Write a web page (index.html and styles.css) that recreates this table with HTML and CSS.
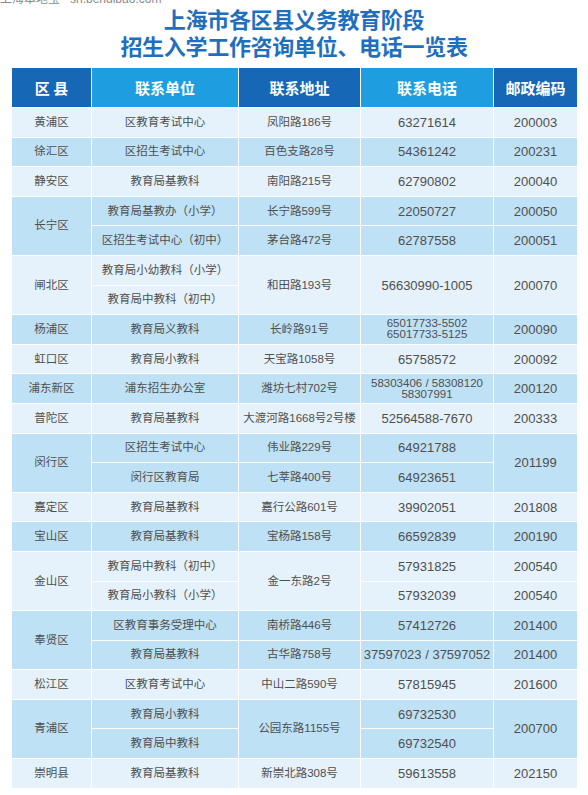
FILE: index.html
```html
<!DOCTYPE html>
<html lang="zh-CN">
<head>
<meta charset="utf-8">
<title>上海市各区县义务教育阶段招生入学工作咨询单位、电话一览表</title>
<link rel="stylesheet" href="styles.css">
</head>
<body>
<div class="page">
  <div class="wm"><span>上海本地宝&nbsp;&nbsp;&nbsp;sh.bendibao.com</span></div>
  <h1 class="title"><span class="tl">上海市各区县义务教育阶段</span><span class="tl">招生入学工作咨询单位、电话一览表</span></h1>
  <div class="grid">
    <div class="h dark">区&nbsp;县</div>
    <div class="h light">联系单位</div>
    <div class="h dark">联系地址</div>
    <div class="h light">联系电话</div>
    <div class="h dark">邮政编码</div>

    <div class="c a">黄浦区</div><div class="c a">区教育考试中心</div><div class="c a">凤阳路186号</div><div class="c a n">63271614</div><div class="c a n">200003</div>

    <div class="c b">徐汇区</div><div class="c b">区招生考试中心</div><div class="c b">百色支路28号</div><div class="c b n">54361242</div><div class="c b n">200231</div>

    <div class="c a">静安区</div><div class="c a">教育局基教科</div><div class="c a">南阳路215号</div><div class="c a n">62790802</div><div class="c a n">200040</div>

    <div class="c b s2">长宁区</div><div class="c b">教育局基教办（小学）</div><div class="c b">长宁路599号</div><div class="c b n">22050727</div><div class="c b n">200050</div>
    <div class="c b">区招生考试中心（初中）</div><div class="c b">茅台路472号</div><div class="c b n">62787558</div><div class="c b n">200051</div>

    <div class="c a s2">闸北区</div><div class="c a">教育局小幼教科（小学）</div><div class="c a s2">和田路193号</div><div class="c a n s2">56630990-1005</div><div class="c a n s2">200070</div>
    <div class="c a">教育局中教科（初中）</div>

    <div class="c b">杨浦区</div><div class="c b">教育局义教科</div><div class="c b">长岭路91号</div><div class="c b n sm">65017733-5502<br>65017733-5125</div><div class="c b n">200090</div>

    <div class="c a">虹口区</div><div class="c a">教育局小教科</div><div class="c a">天宝路1058号</div><div class="c a n">65758572</div><div class="c a n">200092</div>

    <div class="c b">浦东新区</div><div class="c b">浦东招生办公室</div><div class="c b">潍坊七村702号</div><div class="c b n sm">58303406 / 58308120<br>58307991</div><div class="c b n">200120</div>

    <div class="c a">普陀区</div><div class="c a">教育局基教科</div><div class="c a">大渡河路1668号2号楼</div><div class="c a n">52564588-7670</div><div class="c a n">200333</div>

    <div class="c b s2">闵行区</div><div class="c b">区招生考试中心</div><div class="c b">伟业路229号</div><div class="c b n">64921788</div><div class="c b n s2">201199</div>
    <div class="c b">闵行区教育局</div><div class="c b">七莘路400号</div><div class="c b n">64923651</div>

    <div class="c a">嘉定区</div><div class="c a">教育局基教科</div><div class="c a">嘉行公路601号</div><div class="c a n">39902051</div><div class="c a n">201808</div>

    <div class="c b">宝山区</div><div class="c b">教育局基教科</div><div class="c b">宝杨路158号</div><div class="c b n">66592839</div><div class="c b n">200190</div>

    <div class="c a s2">金山区</div><div class="c a">教育局中教科（初中）</div><div class="c a s2">金一东路2号</div><div class="c a n">57931825</div><div class="c a n">200540</div>
    <div class="c a">教育局小教科（小学）</div><div class="c a n">57932039</div><div class="c a n">200540</div>

    <div class="c b s2">奉贤区</div><div class="c b">区教育事务受理中心</div><div class="c b">南桥路446号</div><div class="c b n">57412726</div><div class="c b n">201400</div>
    <div class="c b">教育局基教科</div><div class="c b">古华路758号</div><div class="c b n">37597023 / 37597052</div><div class="c b n">201400</div>

    <div class="c a">松江区</div><div class="c a">区教育考试中心</div><div class="c a">中山二路590号</div><div class="c a n">57815945</div><div class="c a n">201600</div>

    <div class="c b s2">青浦区</div><div class="c b">教育局小教科</div><div class="c b s2">公园东路1155号</div><div class="c b n">69732530</div><div class="c b n s2">200700</div>
    <div class="c b">教育局中教科</div><div class="c b n">69732540</div>

    <div class="c a">崇明县</div><div class="c a">教育局基教科</div><div class="c a">新崇北路308号</div><div class="c a n">59613558</div><div class="c a n">202150</div>
  </div>
</div>
</body>
</html>
```

FILE: styles.css
```css
html, body {
  margin: 0;
  padding: 0;
  background: #ffffff;
}

.page {
  width: 588px;
  height: 795px;
  overflow: hidden;
  font-family: "Liberation Sans", "Noto Sans CJK SC", sans-serif;
}

.wm {
  height: 5px;
  overflow: hidden;
  font-size: 12px;
  line-height: 12px;
  color: #8a8a8a;
}

.wm span {
  display: block;
  margin-top: -7px;
  white-space: nowrap;
}

.title {
  margin: 0;
  height: 63px;
  display: flex;
  flex-direction: column;
  align-items: center;
  gap: 0;
  font-family: "Noto Sans CJK SC", sans-serif;
  font-size: 22px;
  font-weight: 700;
  color: #1f6fbf;
  letter-spacing: -0.3px;
}

.tl {
  display: block;
  height: 27px;
  line-height: 27px;
  overflow: visible;
}

.grid {
  margin-left: 12px;
  width: 565px;
  display: grid;
  grid-template-columns: 79px 146px 121px 132px 83px;
  grid-template-rows: 39px repeat(23, 28.6px);
  column-gap: 1px;
  row-gap: 1px;
  background: #ffffff;
}

.h {
  display: flex;
  align-items: center;
  justify-content: center;
  color: #ffffff;
  font-family: "Noto Sans CJK SC", sans-serif;
  font-size: 15px;
  font-weight: 700;
}

.h.dark {
  background: #1667b6;
}

.h.light {
  background: #1e9ee1;
}

.c {
  display: flex;
  align-items: center;
  justify-content: center;
  text-align: center;
  color: #4f4f4f;
  font-size: 11.5px;
  line-height: 13px;
}

.c.a {
  background: #e5f2fb;
}

.c.b {
  background: #bfe1f5;
}

.c.n {
  font-size: 13px;
}

.c.n.sm {
  font-size: 11.5px;
  line-height: 11px;
}

.s2 {
  grid-row: span 2;
}
```
